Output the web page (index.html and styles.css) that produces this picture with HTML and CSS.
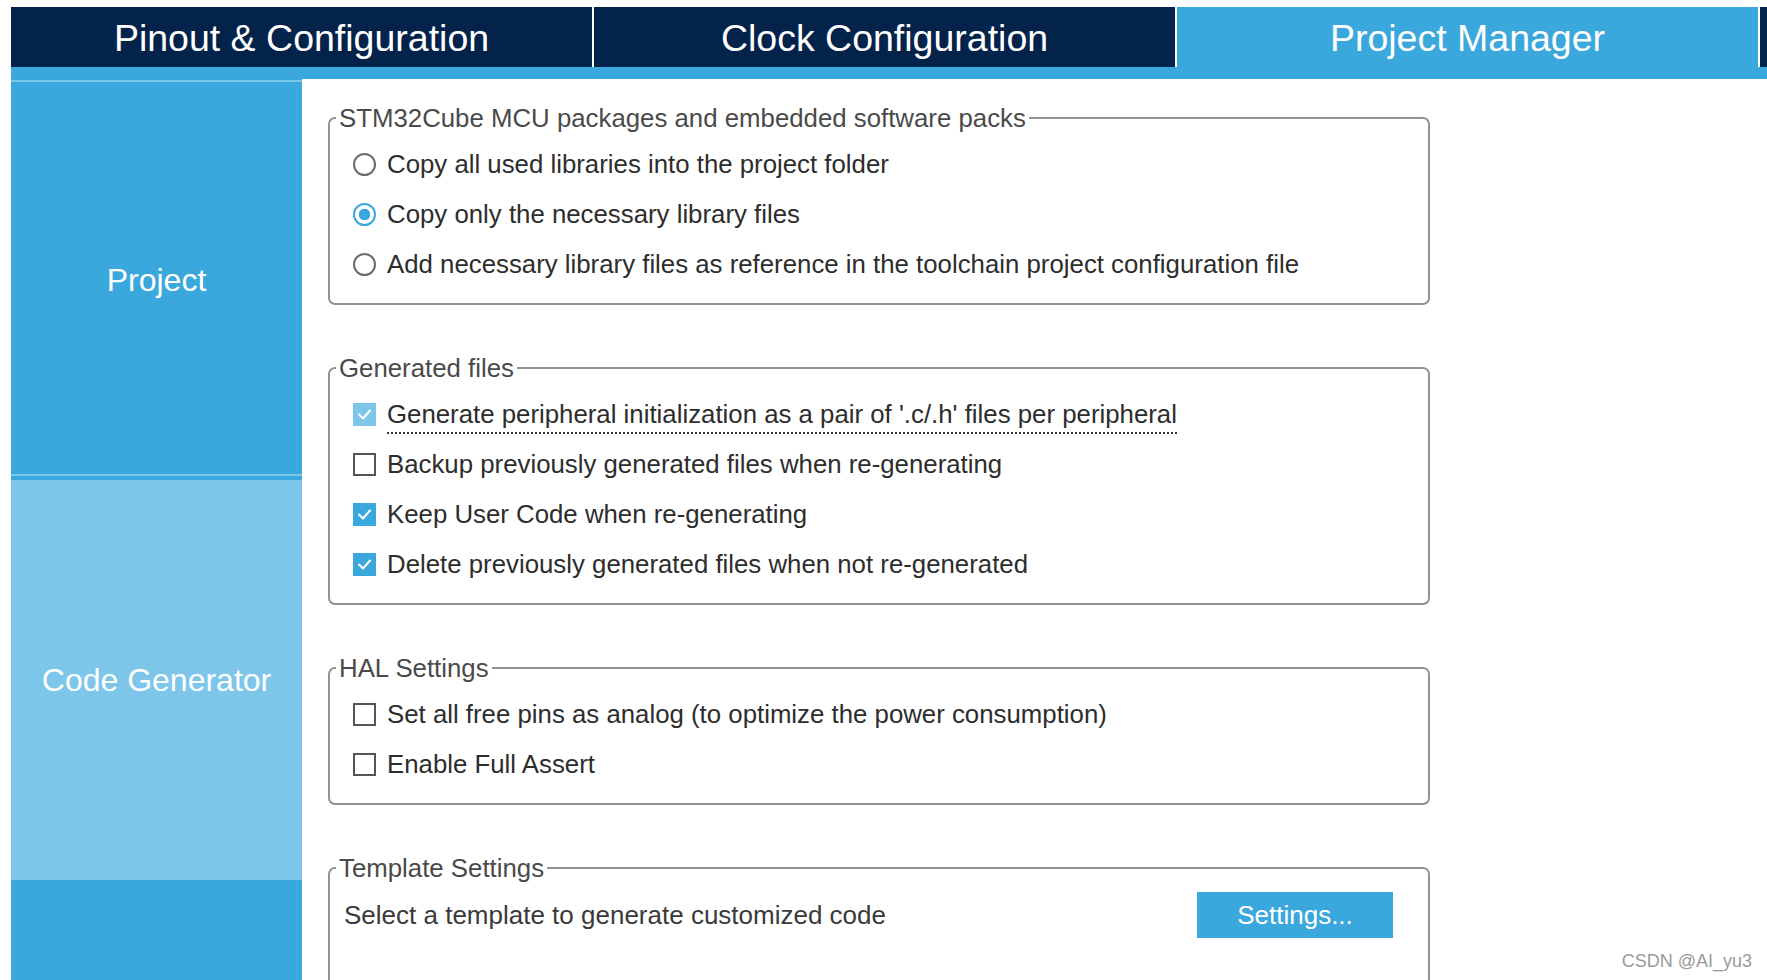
FILE: index.html
```html
<!DOCTYPE html>
<html lang="en">
<head>
<meta charset="utf-8">
<title>Project Manager</title>
<link rel="stylesheet" href="styles.css">
</head>
<body>
<div class="page">
  <div class="tabs">
    <div class="tab">Pinout &amp; Configuration</div>
    <div class="tab">Clock Configuration</div>
    <div class="tab active">Project Manager</div>
    <div class="tab stub"></div>
  </div>
  <div class="tab-strip"></div>
  <div class="body">
    <nav class="side">
      <div class="side-item project">Project</div>
      <div class="side-sep"></div>
      <div class="side-item codegen">Code Generator</div>
      <div class="side-item rest"></div>
    </nav>
    <main class="content">
      <fieldset class="group">
        <legend>STM32Cube MCU packages and embedded software packs</legend>
        <div class="rows">
          <div class="row"><span class="radio"></span><span class="label">Copy all used libraries into the project folder</span></div>
          <div class="row"><span class="radio checked"></span><span class="label">Copy only the necessary library files</span></div>
          <div class="row"><span class="radio"></span><span class="label">Add necessary library files as reference in the toolchain project configuration file</span></div>
        </div>
      </fieldset>

      <fieldset class="group">
        <legend>Generated files</legend>
        <div class="rows">
          <div class="row"><span class="check disabled"><svg viewBox="0 0 23 23"><polyline points="6,11.5 10,15.5 17,7.5"/></svg></span><span class="label focus">Generate peripheral initialization as a pair of '.c/.h' files per peripheral</span></div>
          <div class="row"><span class="check"></span><span class="label">Backup previously generated files when re-generating</span></div>
          <div class="row"><span class="check checked"><svg viewBox="0 0 23 23"><polyline points="6,11.5 10,15.5 17,7.5"/></svg></span><span class="label">Keep User Code when re-generating</span></div>
          <div class="row"><span class="check checked"><svg viewBox="0 0 23 23"><polyline points="6,11.5 10,15.5 17,7.5"/></svg></span><span class="label">Delete previously generated files when not re-generated</span></div>
        </div>
      </fieldset>

      <fieldset class="group">
        <legend>HAL Settings</legend>
        <div class="rows">
          <div class="row"><span class="check"></span><span class="label">Set all free pins as analog (to optimize the power consumption)</span></div>
          <div class="row"><span class="check"></span><span class="label">Enable Full Assert</span></div>
        </div>
      </fieldset>

      <fieldset class="group template">
        <legend>Template Settings</legend>
        <div class="template-row">
          <span class="template-text">Select a template to generate customized code</span>
          <button class="btn" type="button">Settings...</button>
        </div>
      </fieldset>
    </main>
  </div>
  <div class="watermark">CSDN @AI_yu3</div>
</div>
</body>
</html>
```

FILE: styles.css
```css
html, body {
  margin: 0;
  padding: 0;
  background: #ffffff;
}

body {
  font-family: "Liberation Sans", Arial, sans-serif;
  overflow: hidden;
}

.page {
  position: relative;
  box-sizing: border-box;
  width: 1767px;
  height: 980px;
  padding: 7px 0 0 11px;
  overflow: hidden;
}

.tabs {
  display: flex;
  gap: 2px;
  height: 60px;
  overflow: hidden;
}

.tab {
  flex: none;
  width: 581px;
  height: 60px;
  background: #03234b;
  color: #ffffff;
  font-size: 37.5px;
  line-height: 62px;
  text-align: center;
}

.tab.active {
  background: #3aa8dc;
}

.tab.stub {
  flex: 1;
  width: auto;
}

.tab-strip {
  height: 12px;
  background: #3aa8dc;
}

.body {
  display: flex;
  height: 902px;
}

.side {
  flex: none;
  width: 291px;
  display: flex;
  flex-direction: column;
  background: #3aa8dc;
  padding-top: 1px;
}

.side-item {
  display: flex;
  align-items: center;
  justify-content: center;
  color: #ffffff;
  font-size: 32px;
}

.side-item.project {
  box-sizing: border-box;
  height: 394px;
  border-top: 2px solid #7dc6ea;
  padding-top: 4px;
}

.side-sep {
  height: 4px;
  border-top: 2px solid #7dc6ea;
}

.side-item.codegen {
  height: 400px;
  background: #7dc6ea;
}

.side-item.rest {
  flex: 1;
}

.content {
  flex: 1;
  padding: 24px 0 0 26px;
}

.group {
  box-sizing: border-box;
  width: 1102px;
  min-width: 0;
  margin: 0 0 48px 0;
  padding: 0 0 14px 6px;
  border: 2px solid #909395;
  border-radius: 7px;
}

.group legend {
  padding: 0 3px;
  font-size: 25.8px;
  line-height: 30px;
  color: #4a4a4a;
}

.rows {
  padding: 6px 0 0 17px;
}

.row {
  display: flex;
  align-items: center;
  gap: 11px;
  height: 50px;
  font-size: 25.8px;
  color: #2d2d2d;
}

.label {
  line-height: 30px;
}

.label.focus {
  border-bottom: 2px dotted #333333;
  margin-bottom: -5px;
  padding-bottom: 3px;
}

.radio {
  flex: none;
  box-sizing: border-box;
  width: 23px;
  height: 23px;
  border: 2px solid #6b6b6b;
  border-radius: 50%;
  background: #ffffff;
}

.radio.checked {
  border-color: #3aa8dc;
  background: radial-gradient(circle, #3aa8dc 0 5.5px, #ffffff 6px);
}

.check {
  flex: none;
  box-sizing: border-box;
  width: 23px;
  height: 23px;
  border: 2px solid #555555;
  background: #ffffff;
  display: flex;
}

.check svg {
  width: 23px;
  height: 23px;
  margin: -2px;
}

.check polyline {
  fill: none;
  stroke: #ffffff;
  stroke-width: 2;
  stroke-linecap: round;
  stroke-linejoin: round;
}

.check.checked {
  border-color: #3aa8dc;
  background: #3aa8dc;
}

.check.disabled {
  border-color: #7dc6ea;
  background: #7dc6ea;
}

.group.template {
  min-height: 220px;
  margin-bottom: 0;
}

.template-row {
  display: flex;
  align-items: center;
  justify-content: space-between;
  padding: 9px 35px 0 8px;
}

.template-text {
  font-size: 26px;
  color: #3a3a3a;
}

.btn {
  width: 196px;
  height: 46px;
  border: none;
  background: #3aa8dc;
  color: #ffffff;
  font-family: "Liberation Sans", Arial, sans-serif;
  font-size: 26px;
  padding: 0;
}

.watermark {
  position: absolute;
  right: 15px;
  bottom: 8px;
  font-size: 18px;
  color: #9a9a9a;
}
```
